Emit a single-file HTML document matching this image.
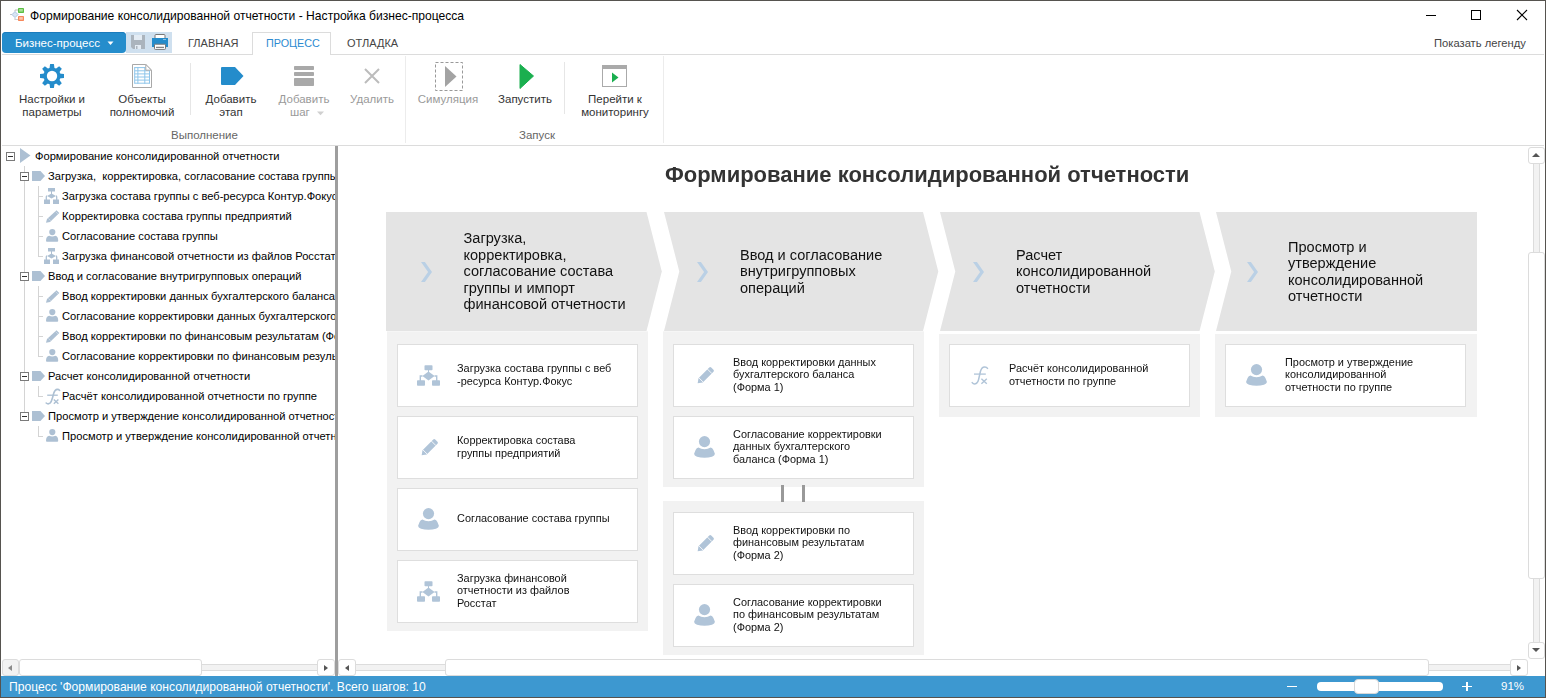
<!DOCTYPE html>
<html><head><meta charset="utf-8">
<style>
*{margin:0;padding:0;box-sizing:border-box}
html,body{width:1546px;height:698px;overflow:hidden;background:#fff;font-family:"Liberation Sans",sans-serif;color:#222}
.a{position:absolute}
.t{position:absolute;white-space:nowrap;line-height:1}
#win{position:absolute;left:0;top:0;width:1546px;height:698px;border:1px solid #505050;overflow:hidden}
</style></head><body>

<!-- title bar -->
<svg class="a" style="left:10px;top:7px" width="16" height="16" viewBox="0 0 16 16">
 <path d="M5 4.5 V3 H8" stroke="#bdbdbd" fill="none" stroke-width="1"/>
 <path d="M5 11 V12.5 H8" stroke="#cfcfcf" fill="none" stroke-width="1.2"/>
 <path d="M0 7.5 H2" stroke="#c8c8c8" stroke-width="1"/>
 <path d="M5 4.6 L8 7.6 L5 10.6 L2 7.6 Z" fill="#d8e5f4" stroke="#a4bedc" stroke-width="0.9"/>
 <rect x="8" y="1" width="6" height="5" rx="0.8" fill="#5cbf44"/>
 <rect x="9.2" y="2" width="3.6" height="2.6" fill="#a8e096"/>
 <rect x="8" y="9" width="6" height="5" rx="0.8" fill="#f7875a"/>
 <rect x="9.2" y="10.1" width="3.6" height="2.6" fill="#fcc6ae"/>
</svg>
<div class="t" style="left:30px;top:10px;font-size:12.1px;color:#000">Формирование консолидированной отчетности - Настройка бизнес-процесса</div>
<!-- window controls -->
<div class="a" style="left:1426px;top:15px;width:10px;height:1px;background:#000"></div>
<div class="a" style="left:1471px;top:10px;width:10px;height:10px;border:1px solid #000"></div>
<svg class="a" style="left:1516px;top:9px" width="12" height="12" viewBox="0 0 12 12"><path d="M1 1 L11 11 M11 1 L1 11" stroke="#000" stroke-width="1.1"/></svg>

<!-- ribbon tabs -->
<div class="a" style="left:2px;top:32px;width:124px;height:21px;background:#258dcc;border-radius:4px;box-shadow:inset 0 1px 0 #1b7cbd"></div>
<div class="t" style="left:15px;top:38px;font-size:11.5px;color:#fff">Бизнес-процесс</div>
<svg class="a" style="left:107px;top:41px" width="7" height="5"><path d="M0.5 0.5 H6.5 L3.5 4 Z" fill="#fff"/></svg>
<div class="a" style="left:126px;top:32px;width:46px;height:21px;background:#cfe0ef"></div>
<!-- save icon -->
<svg class="a" style="left:131px;top:35px" width="14" height="14" viewBox="0 0 14 14">
 <path d="M0 0 H14 V14 H2 L0 12 Z" fill="#abb4bd"/>
 <rect x="3" y="0" width="8" height="5" fill="#e4ecf4"/>
 <rect x="4" y="10" width="6" height="4" fill="#e4ecf4"/>
 <rect x="5" y="11" width="1.5" height="3" fill="#abb4bd"/>
</svg>
<!-- print icon -->
<svg class="a" style="left:151px;top:34px" width="18" height="17" viewBox="0 0 18 17">
 <rect x="4" y="0.5" width="10" height="5" rx="1" fill="#fff" stroke="#777" stroke-width="1"/>
 <rect x="1" y="4" width="16" height="9" fill="#248ccb"/>
 <rect x="3.5" y="10.2" width="11" height="5.2" rx="0.8" fill="#fff" stroke="#777" stroke-width="1"/>
 <rect x="5" y="12.8" width="8" height="1" fill="#666"/>
 <rect x="12" y="5" width="3" height="1" fill="#8cc0e4"/>
</svg>
<div class="a" style="left:2px;top:54px;width:1542px;height:1px;background:#dcdcdc"></div>
<div class="a" style="left:252px;top:32px;width:79px;height:23px;background:#fff;border:1px solid #dcdcdc;border-bottom:none"></div>
<div class="t" style="left:188px;top:38px;font-size:11px;color:#444">ГЛАВНАЯ</div>
<div class="t" style="left:266px;top:38px;font-size:10.8px;color:#2b8ad0">ПРОЦЕСС</div>
<div class="t" style="left:347px;top:38px;font-size:11px;color:#444">ОТЛАДКА</div>
<div class="t" style="left:1434px;top:38px;font-size:11.2px;color:#444">Показать легенду</div>

<!-- ribbon body -->
<!-- ribbon groups -->
<svg class="a" style="left:40px;top:64px" width="24" height="24" viewBox="0 0 24 24">
 <g fill="#248ccb">
  <circle cx="12" cy="12" r="8.6"/>
  <path d="M10.1 0 H13.9 L14.6 5 H9.4 Z"/>
  <path d="M10.1 0 H13.9 L14.6 5 H9.4 Z" transform="rotate(45 12 12)"/>
  <path d="M10.1 0 H13.9 L14.6 5 H9.4 Z" transform="rotate(90 12 12)"/>
  <path d="M10.1 0 H13.9 L14.6 5 H9.4 Z" transform="rotate(135 12 12)"/>
  <path d="M10.1 0 H13.9 L14.6 5 H9.4 Z" transform="rotate(180 12 12)"/>
  <path d="M10.1 0 H13.9 L14.6 5 H9.4 Z" transform="rotate(225 12 12)"/>
  <path d="M10.1 0 H13.9 L14.6 5 H9.4 Z" transform="rotate(270 12 12)"/>
  <path d="M10.1 0 H13.9 L14.6 5 H9.4 Z" transform="rotate(315 12 12)"/>
 </g>
 <circle cx="12" cy="12" r="5.2" fill="#fff"/>
</svg>
<svg class="a" style="left:132px;top:64px" width="20" height="24" viewBox="0 0 20 24">
 <path d="M0.5 0.5 H13.8 L19.5 6.2 V23.5 H0.5 Z" fill="#fff" stroke="#a8a8a8" stroke-width="1"/>
 <g fill="none" stroke="#8ec5ea" stroke-width="1">
  <path d="M2.7 3.6 H13.5 M2.7 6.8 H17.5 M2.7 9.9 H17.5 M2.7 13 H17.5 M2.7 16.1 H17.5 M2.7 19.2 H17.5"/>
  <path d="M2.7 3.1 V19.7 M5.9 3.1 V19.7 M12.8 3.1 V19.7 M17.5 6.3 V19.7"/>
 </g>
 <path d="M13.8 0.5 V6.2 H19.5 Z" fill="#fff" stroke="#a8a8a8" stroke-width="1" stroke-linejoin="round"/>
</svg>
<div class="t" style="left:0;width:104px;text-align:center;top:93px;font-size:11.5px;line-height:13px;color:#333;white-space:normal">Настройки и<br>параметры</div>
<div class="t" style="left:90px;width:104px;text-align:center;top:93px;font-size:11.5px;line-height:13px;color:#333;white-space:normal">Объекты<br>полномочий</div>
<div class="a" style="left:190px;top:63px;width:1px;height:52px;background:#e6e6e6"></div>
<svg class="a" style="left:221px;top:67px" width="23" height="18" viewBox="0 0 23 18">
 <path d="M1 0 H14 L22.5 9 L14 18 H1 Q0 18 0 17 V1 Q0 0 1 0 Z" fill="#248ccb"/>
</svg>
<div class="t" style="left:181px;width:100px;text-align:center;top:93px;font-size:11.5px;line-height:13px;color:#333;white-space:normal">Добавить<br>этап</div>
<svg class="a" style="left:294px;top:66px" width="20" height="20" viewBox="0 0 20 20">
 <rect x="0" y="0" width="20" height="4" rx="0.8" fill="#a9a9a9"/>
 <rect x="0" y="6" width="20" height="4" rx="0.8" fill="#a9a9a9"/>
 <rect x="0" y="12" width="20" height="8" rx="0.8" fill="#a9a9a9"/>
</svg>
<div class="t" style="left:254px;width:100px;text-align:center;top:93px;font-size:11.5px;line-height:13px;color:#9a9a9a">Добавить</div>
<div class="t" style="left:290px;top:106px;font-size:11.5px;line-height:13px;color:#9a9a9a">шаг</div>
<svg class="a" style="left:317px;top:111px" width="8" height="5"><path d="M0 0.5 H7 L3.5 4.2 Z" fill="#d0d0d0"/></svg>
<svg class="a" style="left:364px;top:68px" width="16" height="16" viewBox="0 0 16 16"><path d="M1 1 L15 15 M15 1 L1 15" stroke="#bcbcbc" stroke-width="2"/></svg>
<div class="t" style="left:322px;width:100px;text-align:center;top:93px;font-size:11.5px;line-height:13px;color:#9a9a9a">Удалить</div>
<div class="t" style="left:171px;top:130px;font-size:11.5px;color:#666">Выполнение</div>
<div class="a" style="left:405px;top:56px;width:1px;height:87px;background:#ececec"></div>
<svg class="a" style="left:435px;top:62px" width="29" height="29" viewBox="0 0 29 29">
 <rect x="0.5" y="0.5" width="27" height="28" fill="none" stroke="#999" stroke-width="1" stroke-dasharray="3 2"/>
 <path d="M10 4 L21.5 14.5 L10 25 Z" fill="#a3a3a3"/>
</svg>
<div class="t" style="left:398px;width:100px;text-align:center;top:93px;font-size:11.5px;line-height:13px;color:#9a9a9a">Симуляция</div>
<svg class="a" style="left:519px;top:64px" width="15" height="25" viewBox="0 0 15 25">
 <path d="M1 0.5 L14.5 12 L1 24.5 Z" fill="#1aaf4f" stroke="#1aaf4f" stroke-width="1" stroke-linejoin="round"/>
</svg>
<div class="t" style="left:475px;width:100px;text-align:center;top:93px;font-size:11.5px;line-height:13px;color:#333">Запустить</div>
<div class="a" style="left:564px;top:62px;width:1px;height:52px;background:#e6e6e6"></div>
<svg class="a" style="left:602px;top:65px" width="25" height="22" viewBox="0 0 25 22">
 <rect x="0.5" y="0.5" width="24" height="21" fill="#fff" stroke="#aaa" stroke-width="1"/>
 <rect x="0" y="0" width="25" height="4" fill="#aaa"/>
 <path d="M10 7.5 L16.5 12.5 L10 17.5 Z" fill="#1aaf4f"/>
</svg>
<div class="t" style="left:565px;width:100px;text-align:center;top:93px;font-size:11.5px;line-height:13px;color:#333;white-space:normal">Перейти к<br>мониторингу</div>
<div class="t" style="left:519px;top:130px;font-size:11.5px;color:#666">Запуск</div>
<div class="a" style="left:663px;top:56px;width:1px;height:87px;background:#ececec"></div>

<div class="a" style="left:2px;top:145px;width:1542px;height:1px;background:#dcdcdc"></div>
<!-- tree -->
<div class="a" style="left:1px;top:146px;width:334px;height:513px;overflow:hidden">
<div class="a" style="left:23px;top:20px;width:1px;height:246px;background:#d4d4d4"></div>
<div class="a" style="left:37px;top:40px;width:1px;height:71px;background:#d4d4d4"></div>
<div class="a" style="left:37px;top:140px;width:1px;height:71px;background:#d4d4d4"></div>
<div class="a" style="left:37px;top:240px;width:1px;height:11px;background:#d4d4d4"></div>
<div class="a" style="left:37px;top:280px;width:1px;height:11px;background:#d4d4d4"></div>
<div class="a" style="left:5px;top:6px;width:9px;height:9px;border:1px solid #7a7a7a;background:#fff"></div><div class="a" style="left:7px;top:10px;width:5px;height:1px;background:#333"></div>
<svg class="a" style="left:19px;top:2px" width="11" height="15" viewBox="0 0 11 15"><path d="M0 0 L10.5 7.5 L0 15 Z" fill="#adc0d3"/></svg>
<div class="t" style="left:34px;top:5px;font-size:11.15px;color:#000">Формирование консолидированной отчетности</div>
<div class="a" style="left:19px;top:26px;width:9px;height:9px;border:1px solid #7a7a7a;background:#fff"></div><div class="a" style="left:21px;top:30px;width:5px;height:1px;background:#333"></div>
<svg class="a" style="left:31px;top:25px" width="14" height="11" viewBox="0 0 14 11"><path d="M0 0 H8.5 L13 5 L8.5 10 H0 Z" fill="#adc0d3"/></svg>
<div class="t" style="left:47px;top:25px;font-size:11.15px;color:#000">Загрузка,&nbsp; корректировка, согласование состава группы и импорт финансовой отчетности</div>
<div class="a" style="left:37px;top:50px;width:5px;height:1px;background:#d4d4d4"></div>
<svg class="a" style="left:43px;top:42px" width="16" height="17" viewBox="0 0 16 17">
 <rect x="4" y="0" width="7" height="3.5" fill="#adc0d3"/>
 <rect x="7" y="3" width="1" height="3" fill="#adc0d3"/>
 <path d="M7.5 5.5 L12 8 L7.5 10.5 L3 8 Z" fill="#adc0d3"/>
 <path d="M3 8 Q2.3 8 2.3 9 V12 M12 8 Q12.7 8 12.7 9 V12" stroke="#adc0d3" stroke-width="1.3" fill="none"/>
 <rect x="0" y="11.5" width="6" height="4.5" fill="#adc0d3"/>
 <rect x="9" y="11.5" width="6" height="4.5" fill="#adc0d3"/>
</svg>
<div class="t" style="left:61px;top:45px;font-size:11.15px;color:#000">Загрузка состава группы с веб-ресурса Контур.Фокус</div>
<div class="a" style="left:37px;top:70px;width:5px;height:1px;background:#d4d4d4"></div>
<svg class="a" style="left:45px;top:64px" width="14" height="13" viewBox="0 0 14 13">
 <path d="M10.5 0.3 L13.3 3 L4 12 L0 12.8 L1 9 Z" fill="#adc0d3"/>
 <path d="M9.5 1.5 L12 4 M2.4 8.4 L4.6 10.6" stroke="#dfe6ee" stroke-width="0.6"/>
</svg>
<div class="t" style="left:61px;top:65px;font-size:11.15px;color:#000">Корректировка состава группы предприятий</div>
<div class="a" style="left:37px;top:90px;width:5px;height:1px;background:#d4d4d4"></div>
<svg class="a" style="left:45px;top:83px" width="13" height="13" viewBox="0 0 13 13">
 <circle cx="6.3" cy="3.1" r="3.1" fill="#adc0d3"/>
 <path d="M0 12 Q0 7.2 3.2 6.8 Q6.2 8 9.4 6.8 Q12.2 7.2 12.2 12 Q12.2 12.8 11.2 12.8 H1 Q0 12.8 0 12 Z" fill="#adc0d3"/>
</svg>
<div class="t" style="left:61px;top:85px;font-size:11.15px;color:#000">Согласование состава группы</div>
<div class="a" style="left:37px;top:110px;width:5px;height:1px;background:#d4d4d4"></div>
<svg class="a" style="left:43px;top:102px" width="16" height="17" viewBox="0 0 16 17">
 <rect x="4" y="0" width="7" height="3.5" fill="#adc0d3"/>
 <rect x="7" y="3" width="1" height="3" fill="#adc0d3"/>
 <path d="M7.5 5.5 L12 8 L7.5 10.5 L3 8 Z" fill="#adc0d3"/>
 <path d="M3 8 Q2.3 8 2.3 9 V12 M12 8 Q12.7 8 12.7 9 V12" stroke="#adc0d3" stroke-width="1.3" fill="none"/>
 <rect x="0" y="11.5" width="6" height="4.5" fill="#adc0d3"/>
 <rect x="9" y="11.5" width="6" height="4.5" fill="#adc0d3"/>
</svg>
<div class="t" style="left:61px;top:105px;font-size:11.15px;color:#000">Загрузка финансовой отчетности из файлов Росстат</div>
<div class="a" style="left:19px;top:126px;width:9px;height:9px;border:1px solid #7a7a7a;background:#fff"></div><div class="a" style="left:21px;top:130px;width:5px;height:1px;background:#333"></div>
<svg class="a" style="left:31px;top:125px" width="14" height="11" viewBox="0 0 14 11"><path d="M0 0 H8.5 L13 5 L8.5 10 H0 Z" fill="#adc0d3"/></svg>
<div class="t" style="left:47px;top:125px;font-size:11.15px;color:#000">Ввод и согласование внутригрупповых операций</div>
<div class="a" style="left:37px;top:150px;width:5px;height:1px;background:#d4d4d4"></div>
<svg class="a" style="left:45px;top:144px" width="14" height="13" viewBox="0 0 14 13">
 <path d="M10.5 0.3 L13.3 3 L4 12 L0 12.8 L1 9 Z" fill="#adc0d3"/>
 <path d="M9.5 1.5 L12 4 M2.4 8.4 L4.6 10.6" stroke="#dfe6ee" stroke-width="0.6"/>
</svg>
<div class="t" style="left:61px;top:145px;font-size:11.15px;color:#000">Ввод корректировки данных бухгалтерского баланса (Форма 1)</div>
<div class="a" style="left:37px;top:170px;width:5px;height:1px;background:#d4d4d4"></div>
<svg class="a" style="left:45px;top:163px" width="13" height="13" viewBox="0 0 13 13">
 <circle cx="6.3" cy="3.1" r="3.1" fill="#adc0d3"/>
 <path d="M0 12 Q0 7.2 3.2 6.8 Q6.2 8 9.4 6.8 Q12.2 7.2 12.2 12 Q12.2 12.8 11.2 12.8 H1 Q0 12.8 0 12 Z" fill="#adc0d3"/>
</svg>
<div class="t" style="left:61px;top:165px;font-size:11.15px;color:#000">Согласование корректировки данных бухгалтерского баланса (Форма 1)</div>
<div class="a" style="left:37px;top:190px;width:5px;height:1px;background:#d4d4d4"></div>
<svg class="a" style="left:45px;top:184px" width="14" height="13" viewBox="0 0 14 13">
 <path d="M10.5 0.3 L13.3 3 L4 12 L0 12.8 L1 9 Z" fill="#adc0d3"/>
 <path d="M9.5 1.5 L12 4 M2.4 8.4 L4.6 10.6" stroke="#dfe6ee" stroke-width="0.6"/>
</svg>
<div class="t" style="left:61px;top:185px;font-size:11.15px;color:#000">Ввод корректировки по финансовым результатам (Форма 2)</div>
<div class="a" style="left:37px;top:210px;width:5px;height:1px;background:#d4d4d4"></div>
<svg class="a" style="left:45px;top:203px" width="13" height="13" viewBox="0 0 13 13">
 <circle cx="6.3" cy="3.1" r="3.1" fill="#adc0d3"/>
 <path d="M0 12 Q0 7.2 3.2 6.8 Q6.2 8 9.4 6.8 Q12.2 7.2 12.2 12 Q12.2 12.8 11.2 12.8 H1 Q0 12.8 0 12 Z" fill="#adc0d3"/>
</svg>
<div class="t" style="left:61px;top:205px;font-size:11.15px;color:#000">Согласование корректировки по финансовым результатам (Форма 2)</div>
<div class="a" style="left:19px;top:226px;width:9px;height:9px;border:1px solid #7a7a7a;background:#fff"></div><div class="a" style="left:21px;top:230px;width:5px;height:1px;background:#333"></div>
<svg class="a" style="left:31px;top:225px" width="14" height="11" viewBox="0 0 14 11"><path d="M0 0 H8.5 L13 5 L8.5 10 H0 Z" fill="#adc0d3"/></svg>
<div class="t" style="left:47px;top:225px;font-size:11.15px;color:#000">Расчет консолидированной отчетности</div>
<div class="a" style="left:37px;top:250px;width:5px;height:1px;background:#d4d4d4"></div>
<svg class="a" style="left:43px;top:241px" width="17" height="18" viewBox="0 0 17 18">
 <path d="M2.2 16 Q4 17.6 6 16.2 Q7.4 15 8.6 10.5 L9.8 6 Q11 2.6 13.2 2.4 Q14.8 2.3 15.6 3.4" stroke="#adc0d3" stroke-width="1.6" fill="none" stroke-linecap="round"/>
 <path d="M3.2 8.2 H13.8" stroke="#adc0d3" stroke-width="1.3"/>
 <path d="M9.8 12.4 L14.4 16.8 M14.4 12.4 L9.8 16.8" stroke="#adc0d3" stroke-width="1.4"/>
</svg>
<div class="t" style="left:61px;top:245px;font-size:11.15px;color:#000">Расчёт консолидированной отчетности по группе</div>
<div class="a" style="left:19px;top:266px;width:9px;height:9px;border:1px solid #7a7a7a;background:#fff"></div><div class="a" style="left:21px;top:270px;width:5px;height:1px;background:#333"></div>
<svg class="a" style="left:31px;top:265px" width="14" height="11" viewBox="0 0 14 11"><path d="M0 0 H8.5 L13 5 L8.5 10 H0 Z" fill="#adc0d3"/></svg>
<div class="t" style="left:47px;top:265px;font-size:11.15px;color:#000">Просмотр и утверждение консолидированной отчетности</div>
<div class="a" style="left:37px;top:290px;width:5px;height:1px;background:#d4d4d4"></div>
<svg class="a" style="left:45px;top:283px" width="13" height="13" viewBox="0 0 13 13">
 <circle cx="6.3" cy="3.1" r="3.1" fill="#adc0d3"/>
 <path d="M0 12 Q0 7.2 3.2 6.8 Q6.2 8 9.4 6.8 Q12.2 7.2 12.2 12 Q12.2 12.8 11.2 12.8 H1 Q0 12.8 0 12 Z" fill="#adc0d3"/>
</svg>
<div class="t" style="left:61px;top:285px;font-size:11.15px;color:#000">Просмотр и утверждение консолидированной отчетности по группе</div>
</div>
<div class="a" style="left:335px;top:146px;width:3px;height:530px;background:#9e9e9e"></div>
<!-- scrollbars -->
<div class="a" style="left:18px;top:664px;width:300px;height:7px;background:#f2f2f2;border-top:1px solid #dcdcdc;border-bottom:1px solid #dcdcdc"></div>
<div class="a" style="left:2px;top:659px;width:17px;height:17px;background:#f2f2f2;border:1px solid #dcdcdc;border-radius:3px"></div>
<svg class="a" style="left:8px;top:665px" width="4" height="6"><path d="M0 3 L4 0 V6 Z" fill="#8a8a8a"/></svg>
<div class="a" style="left:19px;top:659px;width:183px;height:17px;background:#fff;border:1px solid #dcdcdc;border-radius:3px"></div>
<div class="a" style="left:317px;top:659px;width:18px;height:17px;background:#fff;border:1px solid #dcdcdc;border-radius:3px"></div>
<svg class="a" style="left:324px;top:665px" width="4" height="6"><path d="M4 3 L0 0 V6 Z" fill="#555"/></svg>
<div class="a" style="left:355px;top:664px;width:1157px;height:7px;background:#f2f2f2;border-top:1px solid #dcdcdc;border-bottom:1px solid #dcdcdc"></div>
<div class="a" style="left:338px;top:659px;width:18px;height:17px;background:#fff;border:1px solid #dcdcdc;border-radius:3px"></div>
<svg class="a" style="left:345px;top:665px" width="4" height="6"><path d="M0 3 L4 0 V6 Z" fill="#555"/></svg>
<div class="a" style="left:445px;top:659px;width:984px;height:17px;background:#fff;border:1px solid #dcdcdc;border-radius:3px"></div>
<div class="a" style="left:1510px;top:659px;width:18px;height:17px;background:#fff;border:1px solid #dcdcdc;border-radius:3px"></div>
<svg class="a" style="left:1517px;top:665px" width="4" height="6"><path d="M4 3 L0 0 V6 Z" fill="#555"/></svg>
<div class="a" style="left:1533px;top:162px;width:7px;height:481px;background:#f2f2f2;border-left:1px solid #dcdcdc;border-right:1px solid #dcdcdc"></div>
<div class="a" style="left:1528px;top:147px;width:17px;height:17px;background:#fff;border:1px solid #dcdcdc;border-radius:3px"></div>
<svg class="a" style="left:1532px;top:153px" width="8" height="4"><path d="M4 0 L8 4 H0 Z" fill="#555"/></svg>
<div class="a" style="left:1528px;top:252px;width:17px;height:327px;background:#fff;border:1px solid #dcdcdc;border-radius:3px"></div>
<div class="a" style="left:1528px;top:642px;width:17px;height:17px;background:#fff;border:1px solid #dcdcdc;border-radius:3px"></div>
<svg class="a" style="left:1532px;top:648px" width="8" height="4"><path d="M4 4 L8 0 H0 Z" fill="#555"/></svg>
<div class="a" style="left:1px;top:676px;width:1544px;height:21px;background:#3d98d0"></div>
<div class="t" style="left:9px;top:681px;font-size:12.1px;color:#fff">Процесс 'Формирование консолидированной отчетности'. Всего шагов: 10</div>
<div class="a" style="left:1287px;top:685.5px;width:10px;height:1.6px;background:#fff"></div>
<div class="a" style="left:1317px;top:682px;width:126px;height:9px;background:#fff;border-radius:4px"></div>
<div class="a" style="left:1354px;top:679px;width:25px;height:15px;background:#fff;border:1px solid #d8d8d8;border-radius:4px"></div>
<div class="a" style="left:1462px;top:685.7px;width:10px;height:1.6px;background:#fff"></div>
<div class="a" style="left:1466.2px;top:682px;width:1.6px;height:9px;background:#fff"></div>
<div class="t" style="left:1501px;top:681px;font-size:11.5px;color:#fff">91%</div>
<div id="brd" class="a" style="left:0;top:0;width:1546px;height:698px;border:1px solid #56534f;pointer-events:none"></div>
<!-- diagram --><div class="a" style="left:0;top:0;width:1546px;height:698px;will-change:transform">
<div class="t" style="left:665px;top:164px;font-size:22px;font-weight:bold;color:#333">Формирование консолидированной отчетности</div>
<svg class="a" style="left:0;top:0" width="1546" height="698"><polygon points="386,212 646.5,212 661.8,271.5 646.5,331 386,331" fill="#e4e4e4"/><polygon points="664,212 923,212 938.3,271.5 923,331 664,331 679.3,271.5" fill="#e4e4e4"/><polygon points="940,212 1199.5,212 1214.8,271.5 1199.5,331 940,331 955.3,271.5" fill="#e4e4e4"/><polygon points="1216,212 1477,212 1477,331 1216,331 1231.3,271.5" fill="#e4e4e4"/></svg>
<svg class="a" style="left:421px;top:262px" width="12" height="20" viewBox="0 0 12 20"><path d="M0 0 H3.9 L11 10 L3.9 20 H0 L7.1 10 Z" fill="#bad0e5"/></svg>
<svg class="a" style="left:697px;top:262px" width="12" height="20" viewBox="0 0 12 20"><path d="M0 0 H3.9 L11 10 L3.9 20 H0 L7.1 10 Z" fill="#bad0e5"/></svg>
<svg class="a" style="left:973px;top:262px" width="12" height="20" viewBox="0 0 12 20"><path d="M0 0 H3.9 L11 10 L3.9 20 H0 L7.1 10 Z" fill="#bad0e5"/></svg>
<svg class="a" style="left:1247px;top:262px" width="12" height="20" viewBox="0 0 12 20"><path d="M0 0 H3.9 L11 10 L3.9 20 H0 L7.1 10 Z" fill="#bad0e5"/></svg>
<div class="a" style="left:463.5px;top:230.25px;font-size:14.56px;line-height:16.5px;color:#111;white-space:nowrap">Загрузка,<br>корректировка,<br>согласование состава<br>группы и импорт<br>финансовой отчетности</div>
<div class="a" style="left:740px;top:246.75px;font-size:14.56px;line-height:16.5px;color:#111;white-space:nowrap">Ввод и согласование<br>внутригрупповых<br>операций</div>
<div class="a" style="left:1016px;top:246.75px;font-size:14.56px;line-height:16.5px;color:#111;white-space:nowrap">Расчет<br>консолидированной<br>отчетности</div>
<div class="a" style="left:1288px;top:238.5px;font-size:14.56px;line-height:16.5px;color:#111;white-space:nowrap">Просмотр и<br>утверждение<br>консолидированной<br>отчетности</div>
<div class="a" style="left:387px;top:331px;width:261px;height:300px;background:#f2f2f2;border-top:1px solid #f6f6f6"></div>
<div class="a" style="left:663px;top:331px;width:261px;height:156px;background:#f2f2f2;border-top:1px solid #f6f6f6"></div>
<div class="a" style="left:663px;top:501px;width:261px;height:154px;background:#f2f2f2"></div>
<div class="a" style="left:939px;top:334px;width:261px;height:83px;background:#f2f2f2"></div>
<div class="a" style="left:1215px;top:334px;width:262px;height:83px;background:#f2f2f2"></div>
<div class="a" style="left:781px;top:485px;width:3px;height:17px;background:#999"></div>
<div class="a" style="left:802px;top:485px;width:3px;height:17px;background:#999"></div>
<div class="a" style="left:397px;top:344px;width:241px;height:63px;background:#fff;border:1px solid #dedede"></div>
<svg class="a" style="left:416.5px;top:365.0px" width="24" height="22" viewBox="0 0 24 22">
 <rect x="7.5" y="0.3" width="8" height="5" rx="0.8" fill="#b0c4d8"/>
 <rect x="11" y="5" width="1" height="2" fill="#b0c4d8"/>
 <path d="M11.5 6.6 L17.6 11 L11.5 15.4 L5.4 11 Z" fill="#b0c4d8"/>
 <path d="M5.5 11 H3.3 V16 M17.5 11 H19.7 V16" stroke="#b0c4d8" stroke-width="1.4" fill="none"/>
 <rect x="0" y="15.2" width="8" height="5.6" rx="0.8" fill="#b0c4d8"/>
 <rect x="15" y="15.2" width="8" height="5.6" rx="0.8" fill="#b0c4d8"/>
</svg>
<div class="a" style="left:457px;top:361.85px;font-size:10.92px;line-height:12.65px;color:#111;white-space:nowrap">Загрузка состава группы с веб<br>-ресурса Контур.Фокус</div>
<div class="a" style="left:397px;top:416px;width:241px;height:63px;background:#fff;border:1px solid #dedede"></div>
<svg class="a" style="left:416.90000000000003px;top:436.4px" width="24" height="24" viewBox="0 0 24 24">
 <g transform="rotate(-45 12 12)">
  <path d="M1.6 12 L5.8 9 H21 Q22.4 9 22.4 10.4 V13.6 Q22.4 15 21 15 H5.8 Z" fill="#b0c4d8"/>
  <path d="M6.4 8.8 V15.2 M18.6 8.8 V15.2" stroke="#fff" stroke-width="0.8"/>
 </g>
</svg>
<div class="a" style="left:457px;top:433.85px;font-size:10.92px;line-height:12.65px;color:#111;white-space:nowrap">Корректировка состава<br>группы предприятий</div>
<div class="a" style="left:397px;top:488px;width:241px;height:63px;background:#fff;border:1px solid #dedede"></div>
<svg class="a" style="left:417.5px;top:507.5px" width="22" height="22" viewBox="0 0 22 22">
 <circle cx="10.5" cy="5.6" r="5.6" fill="#b0c4d8"/>
 <path d="M4.4 11.6 Q7 13.3 10.5 13.3 Q14 13.3 16.6 11.6 Q18.4 12 19.4 14 L20.8 17.5 Q21.2 19.6 18 20.8 Q14.5 21.8 10.5 21.8 Q6.5 21.8 3 20.8 Q-0.2 19.6 0.2 17.5 L1.6 14 Q2.6 12 4.4 11.6 Z" fill="#b0c4d8"/>
</svg>
<div class="a" style="left:457px;top:512.175px;font-size:10.92px;line-height:12.65px;color:#111;white-space:nowrap">Согласование состава группы</div>
<div class="a" style="left:397px;top:560px;width:241px;height:63px;background:#fff;border:1px solid #dedede"></div>
<svg class="a" style="left:416.5px;top:581.0px" width="24" height="22" viewBox="0 0 24 22">
 <rect x="7.5" y="0.3" width="8" height="5" rx="0.8" fill="#b0c4d8"/>
 <rect x="11" y="5" width="1" height="2" fill="#b0c4d8"/>
 <path d="M11.5 6.6 L17.6 11 L11.5 15.4 L5.4 11 Z" fill="#b0c4d8"/>
 <path d="M5.5 11 H3.3 V16 M17.5 11 H19.7 V16" stroke="#b0c4d8" stroke-width="1.4" fill="none"/>
 <rect x="0" y="15.2" width="8" height="5.6" rx="0.8" fill="#b0c4d8"/>
 <rect x="15" y="15.2" width="8" height="5.6" rx="0.8" fill="#b0c4d8"/>
</svg>
<div class="a" style="left:457px;top:571.525px;font-size:10.92px;line-height:12.65px;color:#111;white-space:nowrap">Загрузка финансовой<br>отчетности из файлов<br>Росстат</div>
<div class="a" style="left:673px;top:344px;width:241px;height:63px;background:#fff;border:1px solid #dedede"></div>
<svg class="a" style="left:692.9px;top:364.4px" width="24" height="24" viewBox="0 0 24 24">
 <g transform="rotate(-45 12 12)">
  <path d="M1.6 12 L5.8 9 H21 Q22.4 9 22.4 10.4 V13.6 Q22.4 15 21 15 H5.8 Z" fill="#b0c4d8"/>
  <path d="M6.4 8.8 V15.2 M18.6 8.8 V15.2" stroke="#fff" stroke-width="0.8"/>
 </g>
</svg>
<div class="a" style="left:733px;top:355.525px;font-size:10.92px;line-height:12.65px;color:#111;white-space:nowrap">Ввод корректировки данных<br>бухгалтерского баланса<br>(Форма 1)</div>
<div class="a" style="left:673px;top:416px;width:241px;height:63px;background:#fff;border:1px solid #dedede"></div>
<svg class="a" style="left:693.5px;top:435.5px" width="22" height="22" viewBox="0 0 22 22">
 <circle cx="10.5" cy="5.6" r="5.6" fill="#b0c4d8"/>
 <path d="M4.4 11.6 Q7 13.3 10.5 13.3 Q14 13.3 16.6 11.6 Q18.4 12 19.4 14 L20.8 17.5 Q21.2 19.6 18 20.8 Q14.5 21.8 10.5 21.8 Q6.5 21.8 3 20.8 Q-0.2 19.6 0.2 17.5 L1.6 14 Q2.6 12 4.4 11.6 Z" fill="#b0c4d8"/>
</svg>
<div class="a" style="left:733px;top:427.525px;font-size:10.92px;line-height:12.65px;color:#111;white-space:nowrap">Согласование корректировки<br>данных бухгалтерского<br>баланса (Форма 1)</div>
<div class="a" style="left:673px;top:512px;width:241px;height:63px;background:#fff;border:1px solid #dedede"></div>
<svg class="a" style="left:692.9px;top:532.4px" width="24" height="24" viewBox="0 0 24 24">
 <g transform="rotate(-45 12 12)">
  <path d="M1.6 12 L5.8 9 H21 Q22.4 9 22.4 10.4 V13.6 Q22.4 15 21 15 H5.8 Z" fill="#b0c4d8"/>
  <path d="M6.4 8.8 V15.2 M18.6 8.8 V15.2" stroke="#fff" stroke-width="0.8"/>
 </g>
</svg>
<div class="a" style="left:733px;top:523.525px;font-size:10.92px;line-height:12.65px;color:#111;white-space:nowrap">Ввод корректировки по<br>финансовым результатам<br>(Форма 2)</div>
<div class="a" style="left:673px;top:584px;width:241px;height:63px;background:#fff;border:1px solid #dedede"></div>
<svg class="a" style="left:693.5px;top:603.5px" width="22" height="22" viewBox="0 0 22 22">
 <circle cx="10.5" cy="5.6" r="5.6" fill="#b0c4d8"/>
 <path d="M4.4 11.6 Q7 13.3 10.5 13.3 Q14 13.3 16.6 11.6 Q18.4 12 19.4 14 L20.8 17.5 Q21.2 19.6 18 20.8 Q14.5 21.8 10.5 21.8 Q6.5 21.8 3 20.8 Q-0.2 19.6 0.2 17.5 L1.6 14 Q2.6 12 4.4 11.6 Z" fill="#b0c4d8"/>
</svg>
<div class="a" style="left:733px;top:595.525px;font-size:10.92px;line-height:12.65px;color:#111;white-space:nowrap">Согласование корректировки<br>по финансовым результатам<br>(Форма 2)</div>
<div class="a" style="left:949px;top:344px;width:241px;height:63px;background:#fff;border:1px solid #dedede"></div>
<svg class="a" style="left:971px;top:365.5px" width="18" height="20" viewBox="0 0 18 20">
 <path d="M1.2 16.6 Q2.2 18.1 3.8 18 Q6.6 17.7 7.6 13.5 L9.4 5.5 Q10.6 1.1 13.6 1 Q15.6 0.9 16.5 2.4" stroke="#b0c4d8" stroke-width="1.5" fill="none" stroke-linecap="round"/>
 <path d="M3 8.1 H14.8" stroke="#b0c4d8" stroke-width="1.3"/>
 <path d="M10.4 12.8 L15.8 17.8 M15.8 12.8 L10.4 17.8" stroke="#b0c4d8" stroke-width="1.4"/>
</svg>
<div class="a" style="left:1009px;top:361.85px;font-size:10.92px;line-height:12.65px;color:#111;white-space:nowrap">Расчёт консолидированной<br>отчетности по группе</div>
<div class="a" style="left:1225px;top:344px;width:241px;height:63px;background:#fff;border:1px solid #dedede"></div>
<svg class="a" style="left:1245.5px;top:363.5px" width="22" height="22" viewBox="0 0 22 22">
 <circle cx="10.5" cy="5.6" r="5.6" fill="#b0c4d8"/>
 <path d="M4.4 11.6 Q7 13.3 10.5 13.3 Q14 13.3 16.6 11.6 Q18.4 12 19.4 14 L20.8 17.5 Q21.2 19.6 18 20.8 Q14.5 21.8 10.5 21.8 Q6.5 21.8 3 20.8 Q-0.2 19.6 0.2 17.5 L1.6 14 Q2.6 12 4.4 11.6 Z" fill="#b0c4d8"/>
</svg>
<div class="a" style="left:1285px;top:355.525px;font-size:10.92px;line-height:12.65px;color:#111;white-space:nowrap">Просмотр и утверждение<br>консолидированной<br>отчетности по группе</div>
</div>
</body></html>
